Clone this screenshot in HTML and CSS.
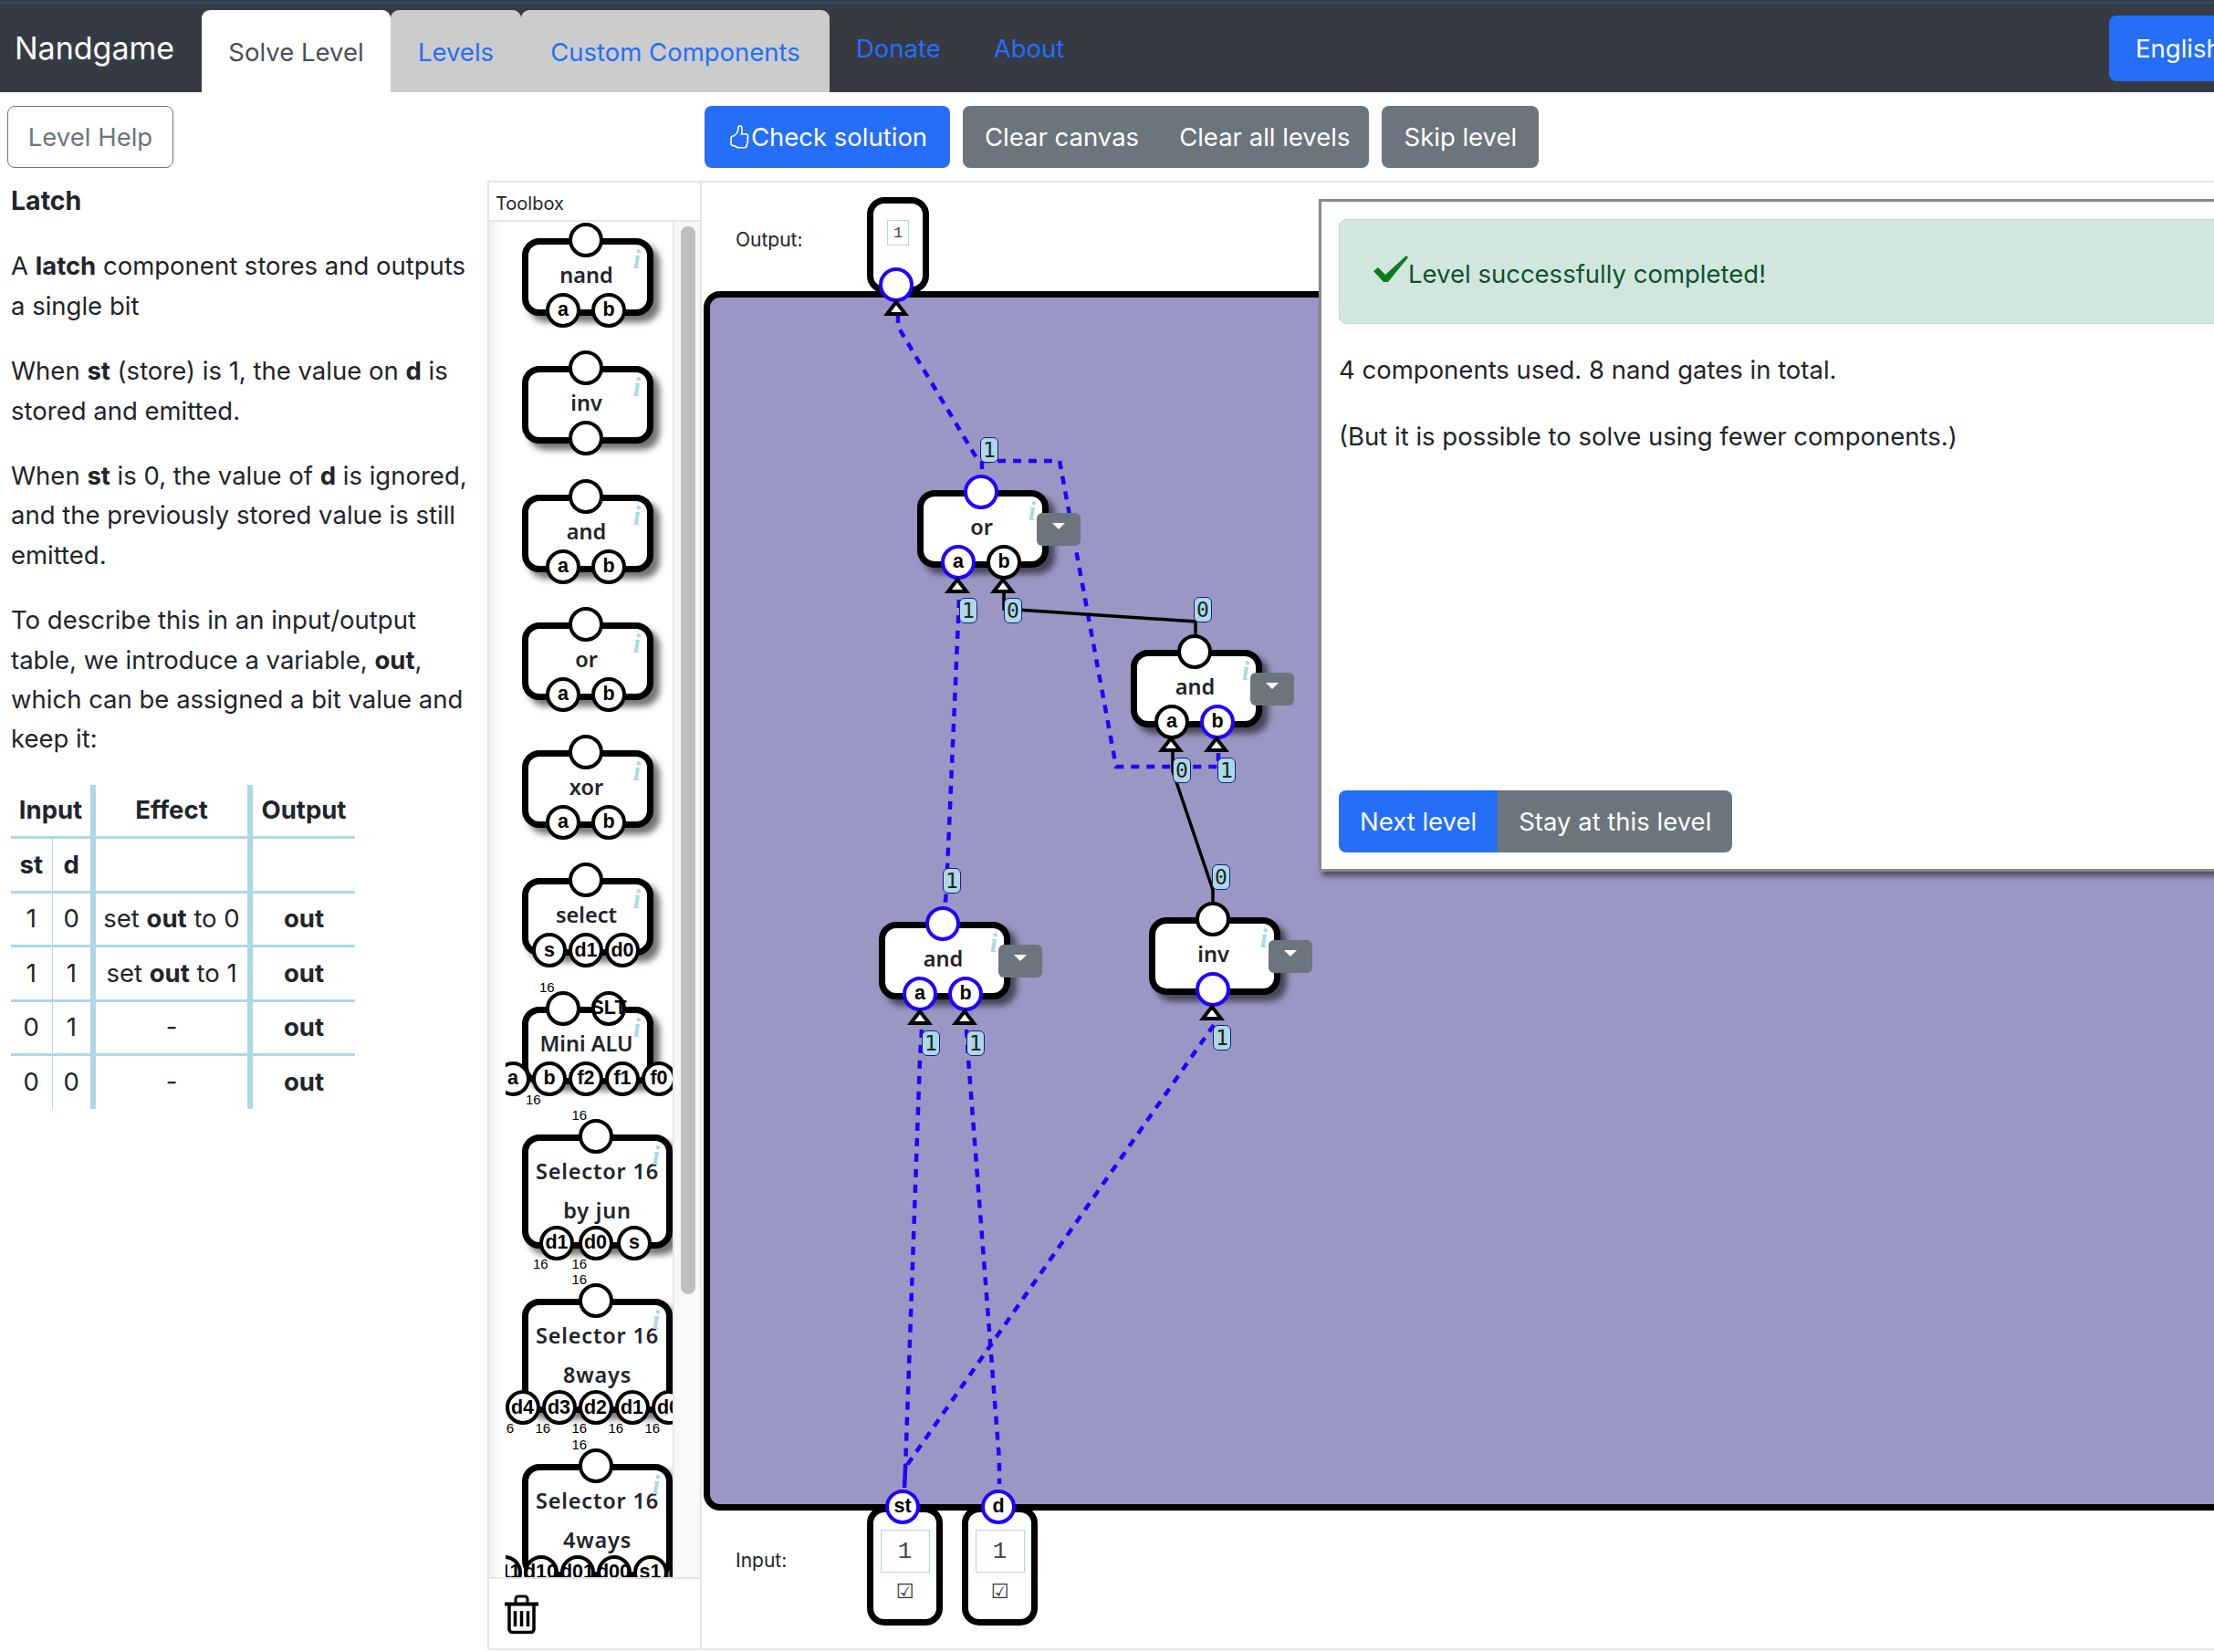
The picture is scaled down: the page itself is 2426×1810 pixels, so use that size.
FILE: index.html
```html
<!DOCTYPE html>
<html lang="en">
<head>
<meta charset="utf-8">
<title>Nandgame</title>
<link rel="stylesheet" href="styles.css">
</head>
<body>
<nav class="nav">
  <a class="brand">Nandgame</a>
  <div class="tabs">
    <a class="tab active">Solve Level</a>
    <a class="tab tab-a">Levels</a>
    <a class="tab tab-b">Custom Components</a>
  </div>
  <a class="navlink donate">Donate</a>
  <a class="navlink about">About</a>
  <a class="lang">English</a>
</nav>
<div class="toolbar">
  <div class="toolbar-left"><button class="btn btn-outline">Level Help</button></div>
  <div class="toolbar-btns">
    <button class="btn btn-primary btn-check"><svg class="thumb" viewBox="0 0 16 16" fill="currentColor"><path d="M8.864.046C7.908-.193 7.02.53 6.956 1.466c-.072 1.051-.23 2.016-.428 2.59-.125.36-.479 1.013-1.04 1.639-.557.623-1.282 1.178-2.131 1.41C2.685 7.288 2 7.87 2 8.72v4.001c0 .845.682 1.464 1.448 1.545 1.07.114 1.564.415 2.068.723l.048.03c.272.165.578.348.97.484.397.136.861.217 1.466.217h3.5c.937 0 1.599-.477 1.934-1.064a1.86 1.86 0 0 0 .254-.912c0-.152-.023-.312-.077-.464.201-.263.38-.578.488-.901.11-.33.172-.762.004-1.149.069-.13.12-.269.159-.403.077-.27.113-.568.113-.857 0-.288-.036-.585-.113-.856a2.144 2.144 0 0 0-.138-.362 1.9 1.9 0 0 0 .234-1.734c-.206-.592-.682-1.1-1.2-1.272-.847-.282-1.803-.276-2.516-.211a9.84 9.84 0 0 0-.443.05 9.365 9.365 0 0 0-.062-4.509A1.38 1.38 0 0 0 9.125.111L8.864.046zM11.5 14.721H8c-.51 0-.863-.069-1.14-.164-.281-.097-.506-.228-.776-.393l-.04-.024c-.555-.339-1.198-.731-2.49-.868-.333-.036-.554-.29-.554-.55V8.72c0-.254.226-.543.62-.65 1.095-.3 1.977-.996 2.614-1.708.635-.71 1.064-1.475 1.238-1.978.243-.7.407-1.768.482-2.85.025-.362.36-.594.667-.518l.262.066c.16.04.258.143.288.255a8.34 8.34 0 0 1-.145 4.725.5.5 0 0 0 .595.644l.003-.001.014-.003.058-.014a8.908 8.908 0 0 1 1.036-.157c.663-.06 1.457-.054 2.11.164.175.058.45.3.57.65.107.308.087.67-.266 1.022l-.353.353.353.354c.043.043.105.141.154.315.048.167.075.37.075.581 0 .212-.027.414-.075.582-.05.174-.111.272-.154.315l-.353.353.353.354c.047.047.109.177.005.488a2.224 2.224 0 0 1-.505.805l-.353.353.353.354c.006.005.041.05.041.17a.866.866 0 0 1-.121.416c-.165.288-.503.56-1.066.56z"/></svg>Check solution</button>
    <div class="btn-group btn-group-clear">
      <button class="btn btn-gray">Clear canvas</button>
      <button class="btn btn-gray">Clear all levels</button>
    </div>
    <button class="btn btn-gray">Skip level</button>
  </div>
</div>
<main class="main">
  <aside class="help">
    <h1 class="help-title">Latch</h1>
    <p>A <b>latch</b> component stores and outputs a single bit</p>
    <p>When <b>st</b> (store) is 1, the value on <b>d</b> is stored and emitted.</p>
    <p>When <b>st</b> is 0, the value of <b>d</b> is ignored, and the previously stored value is still emitted.</p>
    <p>To describe this in an input/output table, we introduce a variable, <b>out</b>, which can be assigned a bit value and keep it:</p>
    <table class="truth">
      <tr class="tr-head"><th colspan="2" class="sep">Input</th><th class="sep">Effect</th><th>Output</th></tr>
      <tr><th class="thin">st</th><th class="sep">d</th><td class="sep"></td><td></td></tr>
      <tr><td class="thin">1</td><td class="sep">0</td><td class="sep">set <b>out</b> to 0</td><td><b>out</b></td></tr>
      <tr><td class="thin">1</td><td class="sep">1</td><td class="sep">set <b>out</b> to 1</td><td><b>out</b></td></tr>
      <tr><td class="thin">0</td><td class="sep">1</td><td class="sep">-</td><td><b>out</b></td></tr>
      <tr><td class="thin">0</td><td class="sep">0</td><td class="sep">-</td><td><b>out</b></td></tr>
    </table>
  </aside>

  <section class="toolbox">
    <div class="tb-head">Toolbox</div>
    <div class="tb-body">
      <div class="tb-list">
        <div class="tb-clip">
          <div class="node"><i class="info">i</i><span class="ports top"><span class="port"></span></span>nand<span class="ports bottom"><span class="port">a</span><span class="port">b</span></span></div>
          <div class="node"><i class="info">i</i><span class="ports top"><span class="port"></span></span>inv<span class="ports bottom"><span class="port"></span></span></div>
          <div class="node"><i class="info">i</i><span class="ports top"><span class="port"></span></span>and<span class="ports bottom"><span class="port">a</span><span class="port">b</span></span></div>
          <div class="node"><i class="info">i</i><span class="ports top"><span class="port"></span></span>or<span class="ports bottom"><span class="port">a</span><span class="port">b</span></span></div>
          <div class="node"><i class="info">i</i><span class="ports top"><span class="port"></span></span>xor<span class="ports bottom"><span class="port">a</span><span class="port">b</span></span></div>
          <div class="node"><i class="info">i</i><span class="ports top"><span class="port"></span></span>select<span class="ports bottom tight"><span class="port">s</span><span class="port">d1</span><span class="port">d0</span></span></div>
          <div class="node"><i class="info">i</i><span class="ports top"><span class="port"><span class="bits bits-up">16</span></span><span class="port slt">SLT</span></span>Mini ALU<span class="ports bottom tight"><span class="port">a</span><span class="port">b<span class="bits bits-down">16</span></span><span class="port">f2</span><span class="port">f1</span><span class="port">f0</span></span></div>
          <div class="node wide"><i class="info">i</i><span class="ports top"><span class="port"><span class="bits bits-up">16</span></span></span>Selector 16<br>by jun<span class="ports bottom mid"><span class="port">d1<span class="bits bits-down">16</span></span><span class="port">d0<span class="bits bits-down">16</span></span><span class="port">s</span></span></div>
          <div class="node wide"><i class="info">i</i><span class="ports top"><span class="port"><span class="bits bits-up">16</span></span></span>Selector 16<br>8ways<span class="ports bottom tight"><span class="port">d4<span class="bits bits-down">16</span></span><span class="port">d3<span class="bits bits-down">16</span></span><span class="port">d2<span class="bits bits-down">16</span></span><span class="port">d1<span class="bits bits-down">16</span></span><span class="port">d0<span class="bits bits-down">16</span></span></span></div>
          <div class="node wide"><i class="info">i</i><span class="ports top"><span class="port"><span class="bits bits-up">16</span></span></span>Selector 16<br>4ways<span class="ports bottom tight"><span class="port">d11</span><span class="port">d10</span><span class="port">d01</span><span class="port">d00</span><span class="port">s1</span><span class="port">s0</span></span></div>
        </div>
      </div>
      <div class="tb-track"><div class="tb-thumb"></div></div>
    </div>
    <div class="tb-trash">
      <svg class="trash" viewBox="0 0 37 43" fill="none" stroke="#000">
        <path d="M12 10V5a3 3 0 0 1 3-3h7a3 3 0 0 1 3 3v5" stroke-width="3"/>
        <path d="M0 10.5H37" stroke-width="4"/>
        <path d="M5 11V38a3.5 3.5 0 0 0 3.5 3.5H28.500a3.500 3.500 0 0 0 3.500-3.500V11" stroke-width="3.500"/>
        <path d="M11.500 18V35M18.500 18V35M25.500 18V35" stroke-width="3.500"/>
      </svg>
    </div>
  </section>

  <section class="stage">
    <div class="stage-label label-out">Output:</div>
    <div class="stage-label label-in">Input:</div>
    <div class="canvas"></div>
    <div class="terminal term-out">
      <span class="field field-sm">1</span>
      <span class="port on tport tport-out"></span>
    </div>
    <div class="terminal term-in term-st">
      <span class="port on tport tport-st">st</span>
      <span class="field">1</span>
      <span class="check">☑</span>
    </div>
    <div class="terminal term-in term-d">
      <span class="port on tport tport-d">d</span>
      <span class="field">1</span>
      <span class="check">☑</span>
    </div>

    <svg class="overlay" viewBox="769 198 1657 1612" fill="none">
      <g class="w-on">
        <path d="M984 345V358L1072 505"/>
        <path d="M1076 505H1161L1223 840H1335V825"/>
        <path d="M1076 505V520"/>
        <path d="M1051 657L1037 975L1035 1000"/>
        <path d="M1010 1128L1008 1160L992 1610L991 1630"/>
        <path d="M1059 1128L1061 1160L1095 1600V1626"/>
        <path d="M1330 1123L992 1608L991 1630"/>
      </g>
      <g class="w-off">
        <path d="M1100 650V667L1310 681V700"/>
        <path d="M1285 823V845L1329 975V990"/>
      </g>
    </svg>

    <div class="node placed n-or"><i class="info">i</i><span class="ports top"><span class="port on"></span></span>or<span class="ports bottom"><span class="port on">a</span><span class="port">b</span></span><span class="menu"><span class="caret"></span></span></div>
    <div class="node placed n-and2"><i class="info">i</i><span class="ports top"><span class="port"></span></span>and<span class="ports bottom"><span class="port">a</span><span class="port on">b</span></span><span class="menu"><span class="caret"></span></span></div>
    <div class="node placed n-and1"><i class="info">i</i><span class="ports top"><span class="port on"></span></span>and<span class="ports bottom"><span class="port on">a</span><span class="port on">b</span></span><span class="menu"><span class="caret"></span></span></div>
    <div class="node placed n-inv"><i class="info">i</i><span class="ports top"><span class="port"></span></span>inv<span class="ports bottom"><span class="port on"></span></span><span class="menu"><span class="caret"></span></span></div>

    <svg class="overlay" viewBox="769 198 1657 1612">
      <g class="tri">
        <polygon points="982,331 972,344 992,344"/>
        <polygon points="1049,635 1039,648 1059,648"/>
        <polygon points="1099,635 1089,648 1109,648"/>
        <polygon points="1283,809 1273,822 1293,822"/>
        <polygon points="1333,809 1323,822 1343,822"/>
        <polygon points="1008,1108 998,1121 1018,1121"/>
        <polygon points="1057,1108 1047,1121 1067,1121"/>
        <polygon points="1328,1103 1318,1116 1338,1116"/>
      </g>
    </svg>

    <span class="wl wl1">1</span>
    <span class="wl wl2">1</span>
    <span class="wl wl3">0</span>
    <span class="wl wl4">0</span>
    <span class="wl wl5">0</span>
    <span class="wl wl6">1</span>
    <span class="wl wl7">0</span>
    <span class="wl wl8">1</span>
    <span class="wl wl9">1</span>
    <span class="wl wl10">1</span>
    <span class="wl wl11">1</span>

    <div class="dialog">
      <div class="alert">
        <svg class="tick" viewBox="0 0 38 29"><polygon points="0,17 5,13 13,21 36,0 38,2 16,29 11,29" fill="#107a1f"/></svg>Level successfully completed!
      </div>
      <p class="d-line d-line1">4 components used. 8 nand gates in total.</p>
      <p class="d-line d-line2">(But it is possible to solve using fewer components.)</p>
      <div class="btn-group d-btns">
        <button class="btn btn-primary">Next level</button>
        <button class="btn btn-gray">Stay at this level</button>
      </div>
    </div>
  </section>
</main>
</body>
</html>
```

FILE: styles.css
```css
* { box-sizing: border-box; }
html, body { margin: 0; padding: 0; }
body {
  width: 2426px;
  height: 1810px;
  overflow: hidden;
  background: #fff;
  color: #212529;
  font-family: Inter, "Liberation Sans", sans-serif;
  font-size: 27.5px;
}

/* nav */
.nav {
  height: 101px;
  display: flex;
  align-items: flex-end;
  position: relative;
  background: linear-gradient(#343a40 0 2px, #2c4a70 2px 4px, #363a43 4px);
}
.brand {
  width: 221px;
  padding-left: 16px;
  align-self: center;
  color: #fff;
  font-size: 34px;
  margin-top: 4px;
}
.tabs { display: flex; height: 90px; }
.tab {
  display: flex;
  align-items: center;
  justify-content: center;
  height: 90px;
  padding-top: 2px;
  background: #cccccc;
  color: #256ef8;
  border-radius: 9px 9px 0 0;
}
.tab.active { width: 207px; background: #fff; color: #495057; }
.tab-a { width: 143px; }
.tab-b { width: 338px; }
.navlink {
  align-self: center;
  color: #256ef8;
  margin-top: 4px;
}
.donate { margin-left: 29px; }
.about { margin-left: 58px; }
.lang {
  position: absolute;
  left: 2311px;
  top: 17px;
  width: 160px;
  height: 72px;
  padding-left: 29px;
  display: flex;
  align-items: center;
  background: #256ef8;
  color: #fff;
  border-radius: 8px;
}

/* toolbar */
.toolbar { height: 97px; padding-top: 15px; display: flex; }
.toolbar-left { width: 772px; padding-left: 8px; }
.toolbar-btns { display: flex; gap: 14px; }
.btn {
  height: 68px;
  padding: 0 23px;
  border: 1px solid transparent;
  border-radius: 8px;
  font: inherit;
  white-space: nowrap;
}
.btn-outline { width: 182px; padding: 0; background: #fff; border-color: #6c757d; color: #6c757d; }
.btn-primary { background: #256ef8; color: #fff; }
.btn-gray { background: #6c757d; color: #fff; }
.btn-check { width: 269px; padding: 0; display: flex; align-items: center; justify-content: center; }
.thumb { width: 26px; height: 28px; }
.btn-group { display: flex; }
.btn-group .btn:first-child { border-radius: 8px 0 0 8px; }
.btn-group .btn:last-child { border-radius: 0 8px 8px 0; }
.btn-group-clear .btn:first-child { padding-right: 21px; }
.btn-group-clear .btn:last-child { padding-left: 21px; padding-right: 20px; }

/* main */
.main { height: 1611px; display: flex; }
.help { width: 534px; flex: none; padding: 0 12px; line-height: 43.4px; }
.help p { margin: 0 0 28px; }
.help-title { margin: 0 0 29px; font-size: 28.5px; font-weight: 700; line-height: 43.4px; }
.truth {
  margin-top: 1px;
  width: 377px;
  border-collapse: collapse;
  table-layout: fixed;
  text-align: center;
}
.truth th, .truth td {
  height: 59.4px;
  padding: 0;
  border-top: 3px solid #add8e6;
  white-space: nowrap;
  line-height: 1;
}
.truth tr.tr-head th { border-top: 0; height: 58px; }
.truth .thin { width: 48px; border-right: 1px solid #add8e6; }
.truth tr.tr-head .sep:first-child { width: 90px; }
.truth .sep { border-right: 6px solid #add8e6; }
.truth tr td.sep:nth-child(2), .truth tr th.sep:nth-child(2) { width: 42px; }
.truth tr.tr-head th.sep:nth-child(2) { width: 172px; }

/* toolbox */
.toolbox {
  width: 235px;
  flex: none;
  height: 1610px;
  border: 2px solid #e5e5e5;
  display: flex;
  flex-direction: column;
  font-size: 20px;
}
.tb-head { height: 43px; flex: none; padding: 9px 0 0 7px; border-bottom: 2px solid #e5e5e5; line-height: 28px; }
.tb-body { flex: none; height: 1487px; display: flex; border-bottom: 2px solid #e5e5e5; }
.tb-list {
  width: 203px;
  flex: none;
  overflow: hidden;
  background: linear-gradient(90deg, #f1f1f1, #fff 17px);
  border-right: 2px solid #e8e8e8;
}
.tb-clip {
  margin-left: 18px;
  width: 183px;
  height: 100%;
  overflow: hidden;
  padding: 18px 0 0 18px;
  display: flex;
  flex-direction: column;
  gap: 55.3px;
}
.tb-track { flex: 1; background: #f8f8f8; padding: 5px 5px 0 7px; }
.tb-thumb { height: 1170px; background: #bfbfbf; border-radius: 8px; }
.tb-trash { flex: 1; padding: 17px 0 0 17px; }
.trash { width: 37px; height: 43px; display: block; }

/* logic nodes */
.node {
  position: relative;
  flex: none;
  width: 144px;
  min-height: 85px;
  border: 7px solid #000;
  border-radius: 19px;
  background: #fff;
  box-shadow: 7px 7px 7px rgba(0, 0, 0, .55);
  padding: 12px 3px 0 0;
  text-align: center;
  font-family: "Noto Sans", sans-serif;
  font-weight: 600;
  font-size: 23.5px;
  line-height: 43px;
  color: #212529;
  white-space: nowrap;
}
.node.wide { width: 165px; height: 125px; letter-spacing: .8px; padding-right: 0; }
.info {
  position: absolute;
  right: 7px;
  top: 0;
  font: italic 700 30px/32px "Liberation Serif", serif;
  letter-spacing: 0;
  color: #add8e6;
}
.ports {
  position: absolute;
  left: -9px;
  right: -5px;
  display: flex;
  justify-content: center;
  gap: 12px;
  letter-spacing: 0;
}
.ports.top { top: -24px; }
.ports.bottom { bottom: -20px; }
.ports.tight { gap: 2px; }
.ports.mid { gap: 4.5px; }
.port {
  position: relative;
  flex: none;
  width: 38px;
  height: 38px;
  border: 4.5px solid #000;
  border-radius: 50%;
  background: #fff;
  display: flex;
  align-items: center;
  justify-content: center;
  font: 700 21.5px/1 "Liberation Sans", sans-serif;
  color: #000;
  white-space: nowrap;
}
.port.on { border-color: #2000ff; }
.bits {
  position: absolute;
  font: 400 15px/16px "Liberation Sans", sans-serif;
}
.bits-up { left: -11px; top: -16px; }
.bits-down { left: -11px; top: 30px; }

/* stage */
.stage {
  position: relative;
  flex: 1;
  height: 1610px;
  overflow: hidden;
  border-top: 2px solid #e5e5e5;
  border-bottom: 2px solid #e5e5e5;
  font-size: 21px;
}
.stage > * { position: absolute; }
.overlay { left: 0; top: -2px; width: 1657px; height: 1612px; pointer-events: none; }
.w-on path { stroke: #2000ff; stroke-width: 4.5px; stroke-dasharray: 9 8; }
.w-off path { stroke: #000; stroke-width: 3.5px; }
.tri polygon { fill: #fff; stroke: #000; stroke-width: 4px; }
.canvas {
  left: 2px;
  top: 119px;
  width: 1800px;
  height: 1336px;
  border: 7px solid #000;
  border-radius: 18px;
  background: #9a97c4;
}
.stage-label { left: 37px; line-height: 28px; }
.label-out { top: 49px; }
.label-in { top: 1496px; }
.terminal {
  border: 7px solid #000;
  border-radius: 19px;
  background: #fff;
  display: flex;
  flex-direction: column;
  align-items: center;
}
.term-out { left: 181px; top: 16px; width: 68px; height: 105px; padding-top: 18px; }
.term-in { top: 1450px; width: 83px; height: 131px; padding-top: 19px; }
.term-st { left: 181px; }
.term-d { left: 285px; }
.field {
  width: 54px;
  height: 47px;
  flex: none;
  border: 1px solid #add8e6;
  display: flex;
  align-items: center;
  justify-content: center;
  font: 400 26px/1 "Liberation Mono", monospace;
  color: #444;
}
.field-sm { width: 24px; height: 28px; font-size: 17px; }
.check { margin-top: 7px; font: 400 22px/28px "DejaVu Sans", sans-serif; color: #333; }
.tport { position: absolute; }
.tport-out { left: 6px; top: 70px; }
.tport-st { left: 13px; top: -25px; }
.tport-d { left: 14px; top: -25px; }

.node.placed { position: absolute; }
.n-or { left: 236px; top: 337px; }
.n-and2 { left: 470px; top: 512px; }
.n-and1 { left: 194px; top: 810px; }
.n-inv { left: 490px; top: 805px; }
.menu {
  position: absolute;
  left: 124px;
  top: 18px;
  width: 48px;
  height: 36px;
  background: #6c757d;
  border-radius: 6px;
  display: flex;
  justify-content: center;
  padding-top: 11px;
}
.caret {
  width: 0;
  height: 0;
  border-left: 7.5px solid transparent;
  border-right: 7.5px solid transparent;
  border-top: 7px solid #fff;
}
.wl {
  width: 20px;
  height: 28px;
  border: 1px solid #1a1a8c;
  border-radius: 6px;
  background: #add8e6;
  display: flex;
  align-items: center;
  justify-content: center;
  font: 400 23px/1 "DejaVu Sans Mono", monospace;
  color: #212529;
}
.wl1 { left: 305px; top: 279px; }
.wl2 { left: 282px; top: 455px; }
.wl3 { left: 331px; top: 455px; }
.wl4 { left: 539px; top: 454px; }
.wl5 { left: 516px; top: 630px; }
.wl6 { left: 565px; top: 630px; }
.wl7 { left: 559px; top: 747px; }
.wl8 { left: 264px; top: 751px; }
.wl9 { left: 241px; top: 929px; }
.wl10 { left: 290px; top: 929px; }
.wl11 { left: 560px; top: 923px; }

/* dialog */
.dialog {
  left: 676px;
  top: 18px;
  width: 1100px;
  height: 737px;
  border: 3px solid #888;
  background: #fff;
  box-shadow: 4px 5px 6px rgba(0, 0, 0, .5);
  padding: 19px 19px;
  font-size: 27.5px;
}
.alert {
  height: 115px;
  display: flex;
  align-items: center;
  padding: 4px 0 0 37px;
  background: #d1e7dd;
  border: 1px solid #badbcc;
  border-radius: 8px;
  color: #0f5132;
}
.tick { width: 38px; height: 29px; margin-top: -10px; flex: none; }
.d-line { margin: 0; line-height: 40px; }
.d-line1 { margin-top: 30px; }
.d-line2 { margin-top: 33px; }
.d-btns { margin-top: 368px; }
.d-btns .btn { padding: 0 22px; }
```
